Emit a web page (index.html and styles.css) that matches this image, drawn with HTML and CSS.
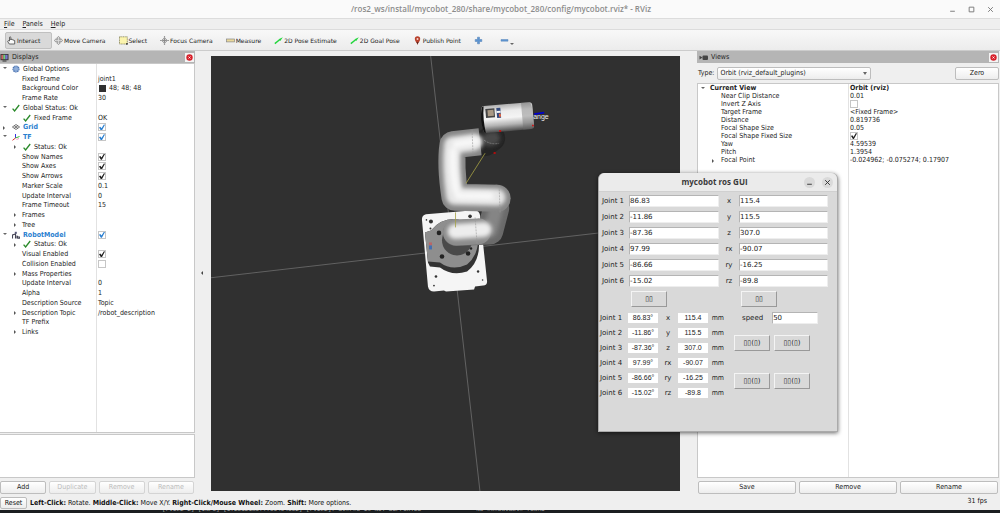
FILE: index.html
```html
<!DOCTYPE html>
<html lang="en">
<head>
<meta charset="utf-8">
<title>/ros2_ws/install/mycobot_280/share/mycobot_280/config/mycobot.rviz* - RViz</title>
<link rel="stylesheet" href="styles.css">
</head>
<body>
<svg class="defs" aria-hidden="true">
  <defs>
    <symbol id="ok" viewBox="0 0 8 8"><path d="M.6 4.6 2.6 7 7.2 1" fill="none" stroke="#2a8a2a" stroke-width="1.3"/></symbol>
    <symbol id="close" viewBox="0 0 9 9"><rect width="9" height="9" fill="#f4f4f4"/><circle cx="4.500" cy="4.500" r="3.200" fill="#d8202a"/><path d="M3.500 3.500 5.500 5.500M5.500 3.500 3.500 5.500" stroke="#fff" stroke-width=".8"/></symbol>
    <linearGradient id="tubeH" x1="0" x2="0" y1="0" y2="1"><stop offset="0" stop-color="#b0b0b0"/><stop offset=".25" stop-color="#ececec"/><stop offset=".5" stop-color="#f4f4f4"/><stop offset=".75" stop-color="#b4b4b4"/><stop offset="1" stop-color="#4c4c4c"/></linearGradient>
    <filter id="soft" filterUnits="userSpaceOnUse" x="400" y="80" width="160" height="220"><feGaussianBlur stdDeviation="2"/></filter>
  </defs>
</svg>

<div class="app">
  <header class="titlebar">
    <h1>/ros2_ws/install/mycobot_280/share/mycobot_280/config/mycobot.rviz* - RViz</h1>
    <div class="win-controls">
      <button aria-label="Minimize"><svg viewBox="0 0 6 6"><path d="M1 4.500h4" /></svg></button>
      <button aria-label="Maximize"><svg viewBox="0 0 6 6"><path d="M1 1h4v4H1z"/></svg></button>
      <button aria-label="Close"><svg viewBox="0 0 6 6"><path d="M1 1l4 4M5 1 1 5"/></svg></button>
    </div>
  </header>

  <nav class="menubar">
    <button><u>F</u>ile</button><button><u>P</u>anels</button><button><u>H</u>elp</button>
  </nav>

  <div class="toolbar">
    <button class="tool active"><svg viewBox="0 0 9 9"><path d="M2.500 5V1.200q.7-.9 1.300 0V4l.2-.8 1.200.1.200.5 1.100.1.200.5 1 .2V8H2.300L.7 5.500l.5-.8z" fill="#fafafa" stroke="#444" stroke-width=".8"/></svg>Interact</button>
    <button class="tool"><svg viewBox="0 0 9 9"><path d="M4.500.3 6.300 2.300H5.400V3.600H6.800V2.700L8.800 4.500 6.800 6.200V5.300H5.400V6.800H6.300L4.500 8.700 2.700 6.800H3.600V5.300H2.200V6.200L.2 4.500 2.200 2.700V3.600H3.600V2.300H2.700z" fill="#ddd" stroke="#777" stroke-width=".6"/></svg>Move Camera</button>
    <button class="tool"><svg viewBox="0 0 9 9"><rect x=".5" y=".8" width="7.800" height="7.200" fill="#fbf4ae" stroke="#77744a" stroke-width=".7" stroke-dasharray="1.200 .5"/><path d="M7.200 7h1.500v1.700H7.200z" fill="#333"/></svg>Select</button>
    <button class="tool"><svg viewBox="0 0 9 9"><path d="M4.500 0v9M0 4.500h9" stroke="#999" stroke-width="1.200"/><path d="M4.500 1.500 7.500 4.500 4.500 7.500 1.500 4.500z" fill="none" stroke="#a8a8a8"/><circle cx="4.500" cy="4.500" r="1.200" fill="#888"/></svg>Focus Camera</button>
    <button class="tool"><svg viewBox="0 0 9 9"><rect x=".5" y="3" width="8" height="2.900" fill="#ead99a" stroke="#888" stroke-width=".7"/></svg>Measure</button>
    <button class="tool"><svg viewBox="0 0 9 9"><path d="M.8 7.600 5.600 3.800" stroke="#22d63c" stroke-width="1.400"/><path d="M4.600 3.300 8.800 1.200 6.300 5z" fill="#22d63c"/></svg>2D Pose Estimate</button>
    <button class="tool"><svg viewBox="0 0 9 9"><path d="M.8 7.600 5.600 3.800" stroke="#22d63c" stroke-width="1.400"/><path d="M4.600 3.300 8.800 1.200 6.300 5z" fill="#22d63c"/></svg>2D Goal Pose</button>
    <button class="tool"><svg viewBox="0 0 9 9"><path d="M4.500 8.800C4 6.500 1.800 5 1.800 2.900a2.700 2.700 0 0 1 5.400 0C7.200 5 5 6.500 4.500 8.800z" fill="#b8402c"/><path d="M3.500 6 4.500 8.800 5.500 6z" fill="#5a2a20"/><circle cx="4.500" cy="2.900" r="1" fill="#f3d4cc"/></svg>Publish Point</button>
    <button class="tool" aria-label="Add tool"><svg viewBox="0 0 9 9"><path d="M3.500 1.200h2v2.300h2.300v2H5.500v2.300h-2V5.500H1.200v-2h2.300z" fill="#5b93d0" stroke="#5b88bc" stroke-width=".6"/></svg></button>
    <button class="tool remove" aria-label="Remove tool"><svg viewBox="0 0 9 9"><path d="M1 3.500h7v1.700H1z" fill="#5b93d0" stroke="#5b88bc" stroke-width=".5"/></svg><span class="drop"></span></button>
  </div>

  <main class="work">
    <section class="dock left">
      <h2 class="dock-title"><svg class="i9" viewBox="0 0 9 9"><rect x=".5" y="1" width="8" height="6.200" fill="#333"/><path d="M1.300 1.800h2v4.500h-2z" fill="#c66"/><path d="M3.300 1.800h2v4.500h-2z" fill="#7c7"/><path d="M5.300 1.800h2.300v4.500H5.300z" fill="#77c"/><path d="M2.500 8h4" stroke="#333"/></svg>Displays<button aria-label="Close Displays"><svg><use href="#close"/></svg></button></h2>
      <div class="tree-box">
        <table class="tree displays">
          <tr><td class="l0 open"><svg class="ic" viewBox="0 0 8 8"><circle cx="4" cy="4" r="3" fill="#7d9fd0" stroke="#4a72b0" stroke-width="1.200" stroke-dasharray="1.400 .6"/><path d="M1 4h6M4 1v6" stroke="#a9c2e4" stroke-width=".6"/></svg>Global Options</td><td></td></tr>
          <tr><td class="l1">Fixed Frame</td><td>joint1</td></tr>
          <tr><td class="l1">Background Color</td><td><i class="swatch"></i>48; 48; 48</td></tr>
          <tr><td class="l1">Frame Rate</td><td>30</td></tr>
          <tr><td class="l0 open"><svg class="ic"><use href="#ok"/></svg>Global Status: Ok</td><td></td></tr>
          <tr><td class="l2"><svg class="ic"><use href="#ok"/></svg>Fixed Frame</td><td>OK</td></tr>
          <tr class="display"><td class="l0 shut"><svg class="ic" viewBox="0 0 8 8"><path d="M4 1.500 7.600 4 4 6.500.4 4zM2.200 2.700l3.700 2.600M5.900 2.700 2.200 5.300" fill="none" stroke="#555" stroke-width=".8"/></svg>Grid</td><td><input type="checkbox" aria-label="Grid" checked></td></tr>
          <tr class="display"><td class="l0 open"><svg class="ic" viewBox="0 0 8 8"><path d="M3.500 5V1" stroke="#33d" /><path d="M3.500 5 7.500 3.500" stroke="#3b3"/><path d="M3.500 5 .5 7.300" stroke="#d33"/><path d="M4.500 6.500 7 5.500" stroke="#e6a" stroke-width=".7"/></svg>TF</td><td><input type="checkbox" aria-label="TF" checked></td></tr>
          <tr><td class="l2 shut"><svg class="ic"><use href="#ok"/></svg>Status: Ok</td><td></td></tr>
          <tr><td class="l1"><label for="names">Show Names</label></td><td><input type="checkbox" id="names" checked></td></tr>
          <tr><td class="l1"><label for="axes">Show Axes</label></td><td><input type="checkbox" id="axes" checked></td></tr>
          <tr><td class="l1"><label for="arrows">Show Arrows</label></td><td><input type="checkbox" id="arrows" checked></td></tr>
          <tr><td class="l1">Marker Scale</td><td>0.1</td></tr>
          <tr><td class="l1">Update Interval</td><td>0</td></tr>
          <tr><td class="l1">Frame Timeout</td><td>15</td></tr>
          <tr><td class="l1 shut">Frames</td><td></td></tr>
          <tr><td class="l1 shut">Tree</td><td></td></tr>
          <tr class="display"><td class="l0 open"><svg class="ic" viewBox="0 0 8 8"><path d="M2.800.8h2v2h-2z" fill="#557"/><path d="M.5 7.500V4L3.500 3v4.500M5 7.500V4.500M6 5v2.300h1.600V5.500" fill="none" stroke="#445" stroke-width="1.100"/></svg>RobotModel</td><td><input type="checkbox" aria-label="RobotModel" checked></td></tr>
          <tr><td class="l2 shut"><svg class="ic"><use href="#ok"/></svg>Status: Ok</td><td></td></tr>
          <tr><td class="l1"><label for="visual">Visual Enabled</label></td><td><input type="checkbox" id="visual" checked></td></tr>
          <tr><td class="l1"><label for="collision">Collision Enabled</label></td><td><input type="checkbox" id="collision"></td></tr>
          <tr><td class="l1 shut">Mass Properties</td><td></td></tr>
          <tr><td class="l1">Update Interval</td><td>0</td></tr>
          <tr><td class="l1">Alpha</td><td>1</td></tr>
          <tr><td class="l1">Description Source</td><td>Topic</td></tr>
          <tr><td class="l1 shut">Description Topic</td><td>/robot_description</td></tr>
          <tr><td class="l1">TF Prefix</td><td></td></tr>
          <tr><td class="l1 shut">Links</td><td></td></tr>
        </table>
      </div>
      <div class="help-box"></div>
      <div class="buttons"><button>Add</button><button disabled>Duplicate</button><button disabled>Remove</button><button disabled>Rename</button></div>
    </section>

    <div class="splitter"><i></i></div>

    <section class="viewport">
      <svg viewBox="211 56 469 434" preserveAspectRatio="xMidYMid slice">
        <path d="M430 50 481 500M205 278 690 222" stroke="#777" stroke-width=".7" fill="none"/>
        <path d="M426 214 474 210q5 0 6 5l7 66q0 4-4 4l-8 1-1 3-28 2-2-1-10 1q-5 0-6-5l-6-67q0-4 4-5z" fill="#f5f5f5"/>
        <g fill="#333"><circle cx="431" cy="221" r="2"/><circle cx="430.500" cy="228" r="1"/><circle cx="470" cy="216" r="1.800"/><circle cx="436" cy="276" r="1.300"/><circle cx="478" cy="271" r="1.200"/><circle cx="434" cy="285" r=".9"/><circle cx="482.500" cy="279.500" r=".8"/><circle cx="426.500" cy="219.500" r=".8"/></g>
        <path d="M425 232 431 230Q442 217 458 219 476 224 479 244 479 262 467 271 452 276 440 267L430 266 428 262z" fill="#333"/>
        <path d="M425 232 431 230Q442 217 458 219 476 224 478 241 477 256 467 264 452 271 440 262L428 261z" fill="#8e8e8e"/>
        <circle cx="457" cy="240" r="15" fill="#4a4a4a"/>
        <g fill="#222"><circle cx="439" cy="232.500" r="2.300"/><circle cx="442" cy="256" r="2.300"/><circle cx="468" cy="253" r="2.300"/><circle cx="471" cy="248" r="1.200"/></g>
        <path d="M429 242h3v3h-3z" fill="#b66"/><path d="M429 245h3v4h-3z" fill="#446fb0"/>
        <g fill="none" stroke-linecap="round" stroke-linejoin="round">
          <path d="M456 232.500 490 231 496 208" stroke="#6a6a6a" stroke-width="26"/>
          <path d="M484 231 490 230 497 205" stroke="#858585" stroke-width="14" filter="url(#soft)"/>
          <path d="M456 232 478 231" stroke="#8c8c8c" stroke-width="26"/>
          <path d="M455 231 484 229" stroke="#ededed" stroke-width="15" filter="url(#soft)"/>
          <path d="M485 143 492 138" stroke="#242424" stroke-width="26"/>
          <path d="M489 139 493 138" stroke="#484848" stroke-width="14" filter="url(#soft)"/>
          <path d="M480 141.500 453 144.500Q450 165 455 197L497 198" stroke="#868686" stroke-width="27" stroke-linecap="butt"/>
          <circle cx="497" cy="198" r="13.500" fill="#868686"/>
          <path d="M474 142 452.500 145Q450 165 454.500 196L497 197" stroke="#e6e6e6" stroke-width="17" filter="url(#soft)"/>
          <path d="M453 151Q452 170 456 190M458 195.500 490 196M456 144 476 141" stroke="#f8f8f8" stroke-width="7" filter="url(#soft)"/>
        </g>
        <path d="M484 140Q491 145 499 143M472 130 473 154M475 217 477 243M499 186 500 212" fill="none" stroke="#999" stroke-width=".6" stroke-dasharray="2 1"/>
        <g transform="rotate(-5 507 117)">
          <rect x="482" y="104" width="51" height="27" rx="3" fill="url(#tubeH)"/>
          <path d="M522 104h8q3 1 3 13t-3 14h-8z" fill="#6b6b6b" opacity=".4"/>
          <path d="M484.500 104q-2 13 0 27l-2-1q-3-12 0-25z" fill="#111"/>
          <path d="M486 107h9v9h-9z" fill="#444"/><path d="M488 108.500h6v6h-6z" fill="#a89884"/>
          <path d="M497 107h4v10h-4z" fill="#344a7c"/><path d="M497 110h4v2h-4z" fill="#f4f4f4"/><path d="M499 113h2v3h-2z" fill="#e66742"/>
        </g>
        <path d="M485 153 466 183M455.500 212V227" stroke="#a5a044" stroke-width=".8"/>
        <path d="M534 114 544 112.500" stroke="#0000d0" stroke-width="1.600"/>
        <path d="M499 130h2v1.500h-2zM493.500 152h2v1.500h-2zM532 124.500h1.500v1.500H532z" fill="#e00000"/>
        <text x="533" y="119" class="frame-name">ange</text>
      </svg>
    </section>

    <div class="splitter plain"></div>

    <section class="dock right">
      <h2 class="dock-title"><svg class="i9" viewBox="0 0 9 9"><rect x="3.500" y="2.500" width="5.500" height="4.500" rx="1" fill="#444"/><path d="M.5 2.800 3.500 4.500.5 6.500z" fill="#444"/></svg>Views<button aria-label="Close Views"><svg><use href="#close"/></svg></button></h2>
      <div class="type-row">
        <label for="type">Type:</label>
        <select id="type"><option>Orbit (rviz_default_plugins)</option></select>
        <button class="push">Zero</button>
      </div>
      <div class="tree-box">
        <table class="tree views">
          <tr class="head"><td class="l0 open">Current View</td><td>Orbit (rviz)</td></tr>
          <tr><td class="l1">Near Clip Distance</td><td>0.01</td></tr>
          <tr><td class="l1"><label for="invert">Invert Z Axis</label></td><td><input type="checkbox" id="invert"></td></tr>
          <tr><td class="l1">Target Frame</td><td>&lt;Fixed Frame&gt;</td></tr>
          <tr><td class="l1">Distance</td><td>0.819736</td></tr>
          <tr><td class="l1">Focal Shape Size</td><td>0.05</td></tr>
          <tr><td class="l1"><label for="fixedsize">Focal Shape Fixed Size</label></td><td><input type="checkbox" id="fixedsize" checked></td></tr>
          <tr><td class="l1">Yaw</td><td>4.59539</td></tr>
          <tr><td class="l1">Pitch</td><td>1.3954</td></tr>
          <tr><td class="l1 shut">Focal Point</td><td>-0.024962; -0.075274; 0.17907</td></tr>
        </table>
      </div>
      <div class="buttons"><button>Save</button><button>Remove</button><button>Rename</button></div>
    </section>
  </main>

  <footer class="statusbar">
    <button class="push">Reset</button>
    <p><b>Left-Click:</b> Rotate. <b>Middle-Click:</b> Move X/Y. <b>Right-Click/Mouse Wheel:</b> Zoom. <b>Shift:</b> More options.</p>
    <span class="fps">31 fps</span>
  </footer>
  <div class="terminal"><span>[rviz2-2] [INFO] [1725121897.796494632] [rviz2]: Stereo is NOT SUPPORTED</span><span>No executable found</span></div>
</div>

<form class="gui">
  <header><h2>mycobot ros GUI</h2><button type="button" aria-label="Minimize"><svg viewBox="0 0 6 6"><path d="M1 4.500h4"/></svg></button><button type="button" aria-label="Close"><svg viewBox="0 0 6 6"><path d="M1 1l4 4M5 1 1 5"/></svg></button></header>
  <div class="targets">
    <label for="j1">Joint 1</label><input id="j1" value="86.83"><label for="px">x</label><input id="px" value="115.4">
    <label for="j2">Joint 2</label><input id="j2" value="-11.86"><label for="py">y</label><input id="py" value="115.5">
    <label for="j3">Joint 3</label><input id="j3" value="-87.36"><label for="pz">z</label><input id="pz" value="307.0">
    <label for="j4">Joint 4</label><input id="j4" value="97.99"><label for="rx">rx</label><input id="rx" value="-90.07">
    <label for="j5">Joint 5</label><input id="j5" value="-86.66"><label for="ry">ry</label><input id="ry" value="-16.25">
    <label for="j6">Joint 6</label><input id="j6" value="-15.02"><label for="rz">rz</label><input id="rz" value="-89.8">
    <button type="button" class="tk in-first">▯▯</button><button type="button" class="tk in-second">▯▯</button>
  </div>
  <div class="lower">
    <div class="readout">
      <span>Joint 1</span><output>86.83°</output><span>x</span><output>115.4</output><span>mm</span>
      <span>Joint 2</span><output>-11.86°</output><span>y</span><output>115.5</output><span>mm</span>
      <span>Joint 3</span><output>-87.36°</output><span>z</span><output>307.0</output><span>mm</span>
      <span>Joint 4</span><output>97.99°</output><span>rx</span><output>-90.07</output><span>mm</span>
      <span>Joint 5</span><output>-86.66°</output><span>ry</span><output>-16.25</output><span>mm</span>
      <span>Joint 6</span><output>-15.02°</output><span>rz</span><output>-89.8</output><span>mm</span>
    </div>
    <div class="controls">
      <div class="speed"><label for="speed">speed</label><input id="speed" value="50"></div>
      <div class="grip"><button type="button" class="tk">▯▯(▯)</button><button type="button" class="tk">▯▯(▯)</button><button type="button" class="tk">▯▯(▯)</button><button type="button" class="tk">▯▯(▯)</button></div>
    </div>
  </div>
</form>
</body>
</html>
```
FILE: styles.css
```css
* { box-sizing: border-box; }
body { margin: 0; background: #1b1e20; color: #222; font: 7px/9px "DejaVu Sans Condensed", "DejaVu Sans", sans-serif; }
button, input, select { margin: 0; padding: 0; border: 0; background: none; color: inherit; font: inherit; }
h1, h2, p { margin: 0; font-size: inherit; }
svg { display: block; }
table { border-collapse: collapse; border-spacing: 0; }
.defs { position: absolute; width: 0; height: 0; }

.app { display: flex; flex-direction: column; height: 100vh; background: #efefef; }

.titlebar { display: flex; align-items: center; height: 19px; flex: none; background: #fafafa; border-bottom: 1px solid #dcdcdc; }
.titlebar h1 { flex: 1; padding-left: 53px; text-align: center; font: 600 8px/16px "Open Sans", "Noto Sans", sans-serif; color: #8c8c8c; }
.win-controls { display: flex; gap: 12px; padding-right: 6px; }
.win-controls svg, .gui header svg { width: 7px; height: 7px; fill: none; stroke: #777; stroke-width: 0.8; }

.menubar { display: flex; flex: none; gap: 8px; height: 11px; padding-left: 4px; border-bottom: 1px solid #dcdcdc; line-height: 10px; }

.toolbar { display: flex; flex: none; align-items: center; gap: 13px; height: 21px; padding-left: 5px; background: linear-gradient(#f8f8f8, #ececec); border-bottom: 1px solid #ccc; font: 6px/9px "DejaVu Sans", sans-serif; }
.tool { display: flex; align-items: center; gap: 1px; white-space: nowrap; }
.tool svg { width: 9px; height: 9px; }
.tool.active { width: 47px; height: 17px; margin-right: -11px; padding-left: 1px; background: #d9d9d9; border: 1px solid #c0c0c0; border-radius: 2px; }
.remove { margin-left: 4px; }
.drop { align-self: flex-end; border: 2px solid transparent; border-top-color: #666; border-bottom: 0; }

.work { display: flex; flex: 1; min-height: 0; }
.dock { display: flex; flex-direction: column; }
.left { flex: 0 0 195px; }
.right { flex: 0 0 303px; padding-right: 1px; }
.dock-title { display: flex; align-items: center; flex: none; gap: 3px; height: 12px; padding-right: 1px; background: #b5b5b5; font-weight: normal; }
.dock-title button { margin-left: auto; }
.dock-title svg { width: 9px; height: 9px; }
.right .dock-title { padding-left: 2px; }

.tree-box { flex: 1; min-height: 0; background: linear-gradient(90deg, transparent 96px, #e2e2e2 96px, #e2e2e2 97px, transparent 97px) #fff; border: 1px solid #c8c8c8; border-width: 1px 1px 1px 0; }
.right .tree-box { background: linear-gradient(90deg, transparent 150px, #e2e2e2 150px, #e2e2e2 151px, transparent 151px) #fff; border-width: 1px; }
.tree { width: 100%; table-layout: fixed; white-space: nowrap; }
.tree td { position: relative; height: 8px; padding: 0; line-height: 8px; vertical-align: middle; }
.tree td:first-child { width: 97px; }
.displays { height: 273px; }
.tree.views td:first-child { width: 151px; }
.tree td + td { padding-left: 1px; }
.tree .l0 { padding-left: 12px; }
.tree .l1 { padding-left: 22px; }
.tree .l2 { padding-left: 23px; }
.views .l1 { padding-left: 23px; }
.ic { display: inline-block; width: 8px; height: 8px; margin-right: 3px; vertical-align: bottom; }
.open::before, .shut::before { content: ""; position: absolute; top: 3px; left: 3px; border: 2px solid transparent; }
.open::before { border-top-color: #666; border-bottom: 0; }
.shut::before { border-left-color: #555; border-right: 0; }
.l1.shut::before, .l2.shut::before { left: 14px; }
.display { color: #2a7fd0; }
.display td:first-child, .head { font-weight: bold; }
.swatch { display: inline-block; width: 7px; height: 7px; margin: 0 3px 0 1px; background: #303030; vertical-align: bottom; }
.tree input { display: block; appearance: none; width: 8px; height: 8px; background: #fff; border: 1px solid #c6c6c6; }
.tree input:checked::before { content: ""; display: block; height: 6px; background: currentColor; clip-path: polygon(0 50%, 22% 38%, 42% 65%, 82% 0, 100% 8%, 48% 100%, 32% 100%); }

.help-box { flex: 0 0 44px; margin-top: 1px; background: #fff; border: 1px solid #c8c8c8; border-left: 0; }
.buttons { display: flex; gap: 3px; padding: 3px 1px 1px 0; }
.right .buttons { padding-left: 1px; }
.buttons button, .push { flex: 1; height: 13px; background: linear-gradient(#fff, #ededed); border: 1px solid #bdbdbd; border-radius: 2px; }
.buttons button:disabled { color: #bcbcbc; border-color: #d4d4d4; }

.splitter { display: flex; align-items: center; flex: 0 0 16px; padding-left: 6px; }
.splitter i { border: 2px solid transparent; border-right-color: #444; border-left: 0; }
.plain { flex-basis: 17px; }
.viewport { flex: 1; min-width: 0; margin: 5px 0 4px; background: #303030; }
.viewport svg { width: 100%; height: 100%; }
.frame-name { fill: #eee; font: 7px "Liberation Sans", sans-serif; }

.type-row { position: relative; display: flex; align-items: center; flex: none; gap: 3px; height: 20px; padding-left: 1px; }
.type-row select { width: 154px; height: 13px; padding-left: 2px; appearance: none; background: linear-gradient(#fff, #ededed); border: 1px solid #bdbdbd; border-radius: 2px; }
.type-row::after { content: ""; position: absolute; left: 166px; top: 9px; border: 2px solid transparent; border-top: 3px solid #666; border-bottom: 0; }
.type-row .push { flex: 0 0 44px; margin-left: auto; }

.statusbar { display: flex; align-items: center; flex: none; gap: 3px; height: 15px; padding: 1px 13px 0 0; color: #111; }
.statusbar .push { flex: 0 0 27px; height: 12px; }
.fps { margin: 1px 0 0 auto; align-self: flex-start; }
.terminal { display: flex; align-items: flex-end; flex: none; gap: 55px; height: 3px; padding-left: 162px; overflow: hidden; background: #1b1e20; color: #aaa; font: 6px/6px "Liberation Mono", monospace; white-space: nowrap; }

.gui { position: absolute; left: 598px; top: 173px; width: 240px; padding-bottom: 33px; background: #d9d9d9; border: 1px solid #aaa; border-top: 0; border-radius: 6px 6px 0 0; box-shadow: 0 1px 4px rgba(0, 0, 0, 0.6); font-family: "DejaVu Sans", sans-serif; }
.gui header { display: flex; align-items: center; gap: 7px; height: 19px; padding-right: 4px; background: #ebebeb; border-bottom: 1px solid #d0d0d0; border-radius: 6px 6px 0 0; }
.gui h2 { flex: 1; padding-left: 33px; text-align: center; font: 700 8px/18px "Open Sans", "Noto Sans", sans-serif; color: #3a3a3a; }
.gui header button { display: flex; align-items: center; justify-content: center; width: 11px; height: 11px; border-radius: 50%; background: #dadada; }
.gui header svg { stroke: #333; }
.targets { display: grid; grid-template-columns: 26px 90px 14px 89px; column-gap: 3px; row-gap: 4px; padding: 3px 10px 0 1px; align-items: center; text-align: center; }
.gui input { width: 100%; height: 12px; background: #fff; border: 1px solid #eee; border-top-color: #b4b4b4; border-left-color: #b4b4b4; }
.tk { height: 16px; width: 36px; justify-self: start; background: #d9d9d9; border: 1px solid; border-color: #f4f4f4 #999 #999 #f4f4f4; }
.in-first { grid-column: 2; margin-left: 2px; }
.in-second { grid-column: 4; margin-left: 2px; }
.lower { display: flex; gap: 10px; padding: 5px 0 0 1px; }
.readout { display: grid; grid-template-columns: 28px 30px 20px 30px 16px; row-gap: 5px; align-content: start; margin-top: 1px; line-height: 10px; text-align: center; }
.readout span:nth-child(5n + 1) { text-align: left; }
.readout span:nth-child(5n) { font-family: "DejaVu Sans Condensed", sans-serif; text-align: right; }
.readout output { background: #fff; font-family: "Liberation Sans", sans-serif; }
.speed { display: flex; align-items: center; gap: 9px; padding-left: 8px; }
.speed input { width: 46px; }
.grip { display: grid; grid-template-columns: 36px 36px; gap: 22px 4px; margin-top: 11px; }
```
